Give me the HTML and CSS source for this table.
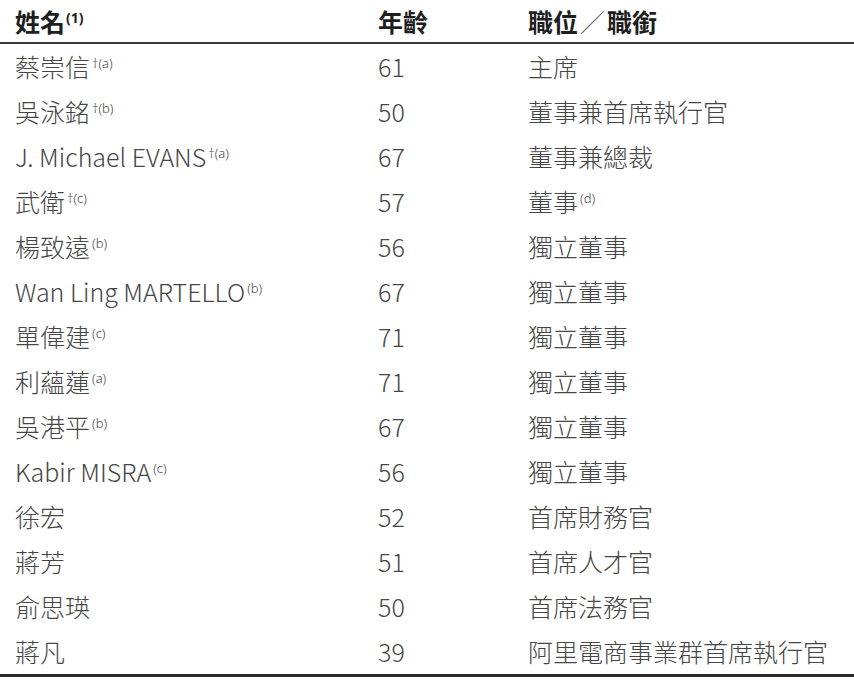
FILE: index.html
```html
<!DOCTYPE html>
<html lang="zh-Hant">
<head>
<meta charset="utf-8">
<link rel="stylesheet" href="styles.css">
</head>
<body>
<table class="board">
  <thead>
    <tr><th class="c-name">姓名<sup class="hs">(1)</sup></th><th class="c-age">年齡</th><th class="c-title">職位<span class="slash">／</span>職銜</th></tr>
  </thead>
  <tbody>
    <tr><td class="c-name">蔡崇信<sup>†(a)</sup></td><td class="c-age">61</td><td class="c-title">主席</td></tr>
    <tr><td class="c-name">吳泳銘<sup>†(b)</sup></td><td class="c-age">50</td><td class="c-title">董事兼首席執行官</td></tr>
    <tr><td class="c-name">J. Michael EVANS<sup>†(a)</sup></td><td class="c-age">67</td><td class="c-title">董事兼總裁</td></tr>
    <tr><td class="c-name">武衛<sup>†(c)</sup></td><td class="c-age">57</td><td class="c-title">董事<sup>(d)</sup></td></tr>
    <tr><td class="c-name">楊致遠<sup>(b)</sup></td><td class="c-age">56</td><td class="c-title">獨立董事</td></tr>
    <tr><td class="c-name">Wan Ling MARTELLO<sup>(b)</sup></td><td class="c-age">67</td><td class="c-title">獨立董事</td></tr>
    <tr><td class="c-name">單偉建<sup>(c)</sup></td><td class="c-age">71</td><td class="c-title">獨立董事</td></tr>
    <tr><td class="c-name">利蘊蓮<sup>(a)</sup></td><td class="c-age">71</td><td class="c-title">獨立董事</td></tr>
    <tr><td class="c-name">吳港平<sup>(b)</sup></td><td class="c-age">67</td><td class="c-title">獨立董事</td></tr>
    <tr><td class="c-name">Kabir MISRA<sup>(c)</sup></td><td class="c-age">56</td><td class="c-title">獨立董事</td></tr>
    <tr><td class="c-name">徐宏</td><td class="c-age">52</td><td class="c-title">首席財務官</td></tr>
    <tr><td class="c-name">蔣芳</td><td class="c-age">51</td><td class="c-title">首席人才官</td></tr>
    <tr><td class="c-name">俞思瑛</td><td class="c-age">50</td><td class="c-title">首席法務官</td></tr>
    <tr><td class="c-name">蔣凡</td><td class="c-age">39</td><td class="c-title">阿里電商事業群首席執行官</td></tr>
  </tbody>
</table>
</body>
</html>
```

FILE: styles.css
```css
html, body {
  margin: 0;
  padding: 0;
  background: #ffffff;
}
body {
  font-family: "Noto Sans CJK TC", "Noto Sans", sans-serif;
  color: #464646;
}
.board {
  width: 854px;
  border-collapse: collapse;
  table-layout: fixed;
  border-bottom: 3px solid #2a2a2a;
}
.board th, .board td {
  padding: 0;
  text-align: left;
  vertical-align: middle;
  white-space: nowrap;
}
.board th {
  height: 42px;
  font-size: 25px;
  font-weight: 700;
  color: #1e1e1e;
  border-bottom: 2px solid #3a3a3a;
  line-height: 1;
}
.board td {
  height: 45px;
  font-size: 25px;
  font-weight: 300;
  line-height: 1;
}
.c-name { width: 363px; padding-left: 15px !important; }
.c-age { width: 150px; }
.c-title { width: auto; }
.slash {
  font-weight: 300;
  color: #555555;
  margin: 0 2px;
}
sup {
  font-family: "Noto Sans", sans-serif;
  font-size: 13px;
  font-weight: 300;
  vertical-align: 9px;
  line-height: 0;
  margin-left: 2px;
  letter-spacing: 0;
}
sup.hs {
  font-weight: 700;
  font-size: 14px;
  margin-left: 1px;
}
```
